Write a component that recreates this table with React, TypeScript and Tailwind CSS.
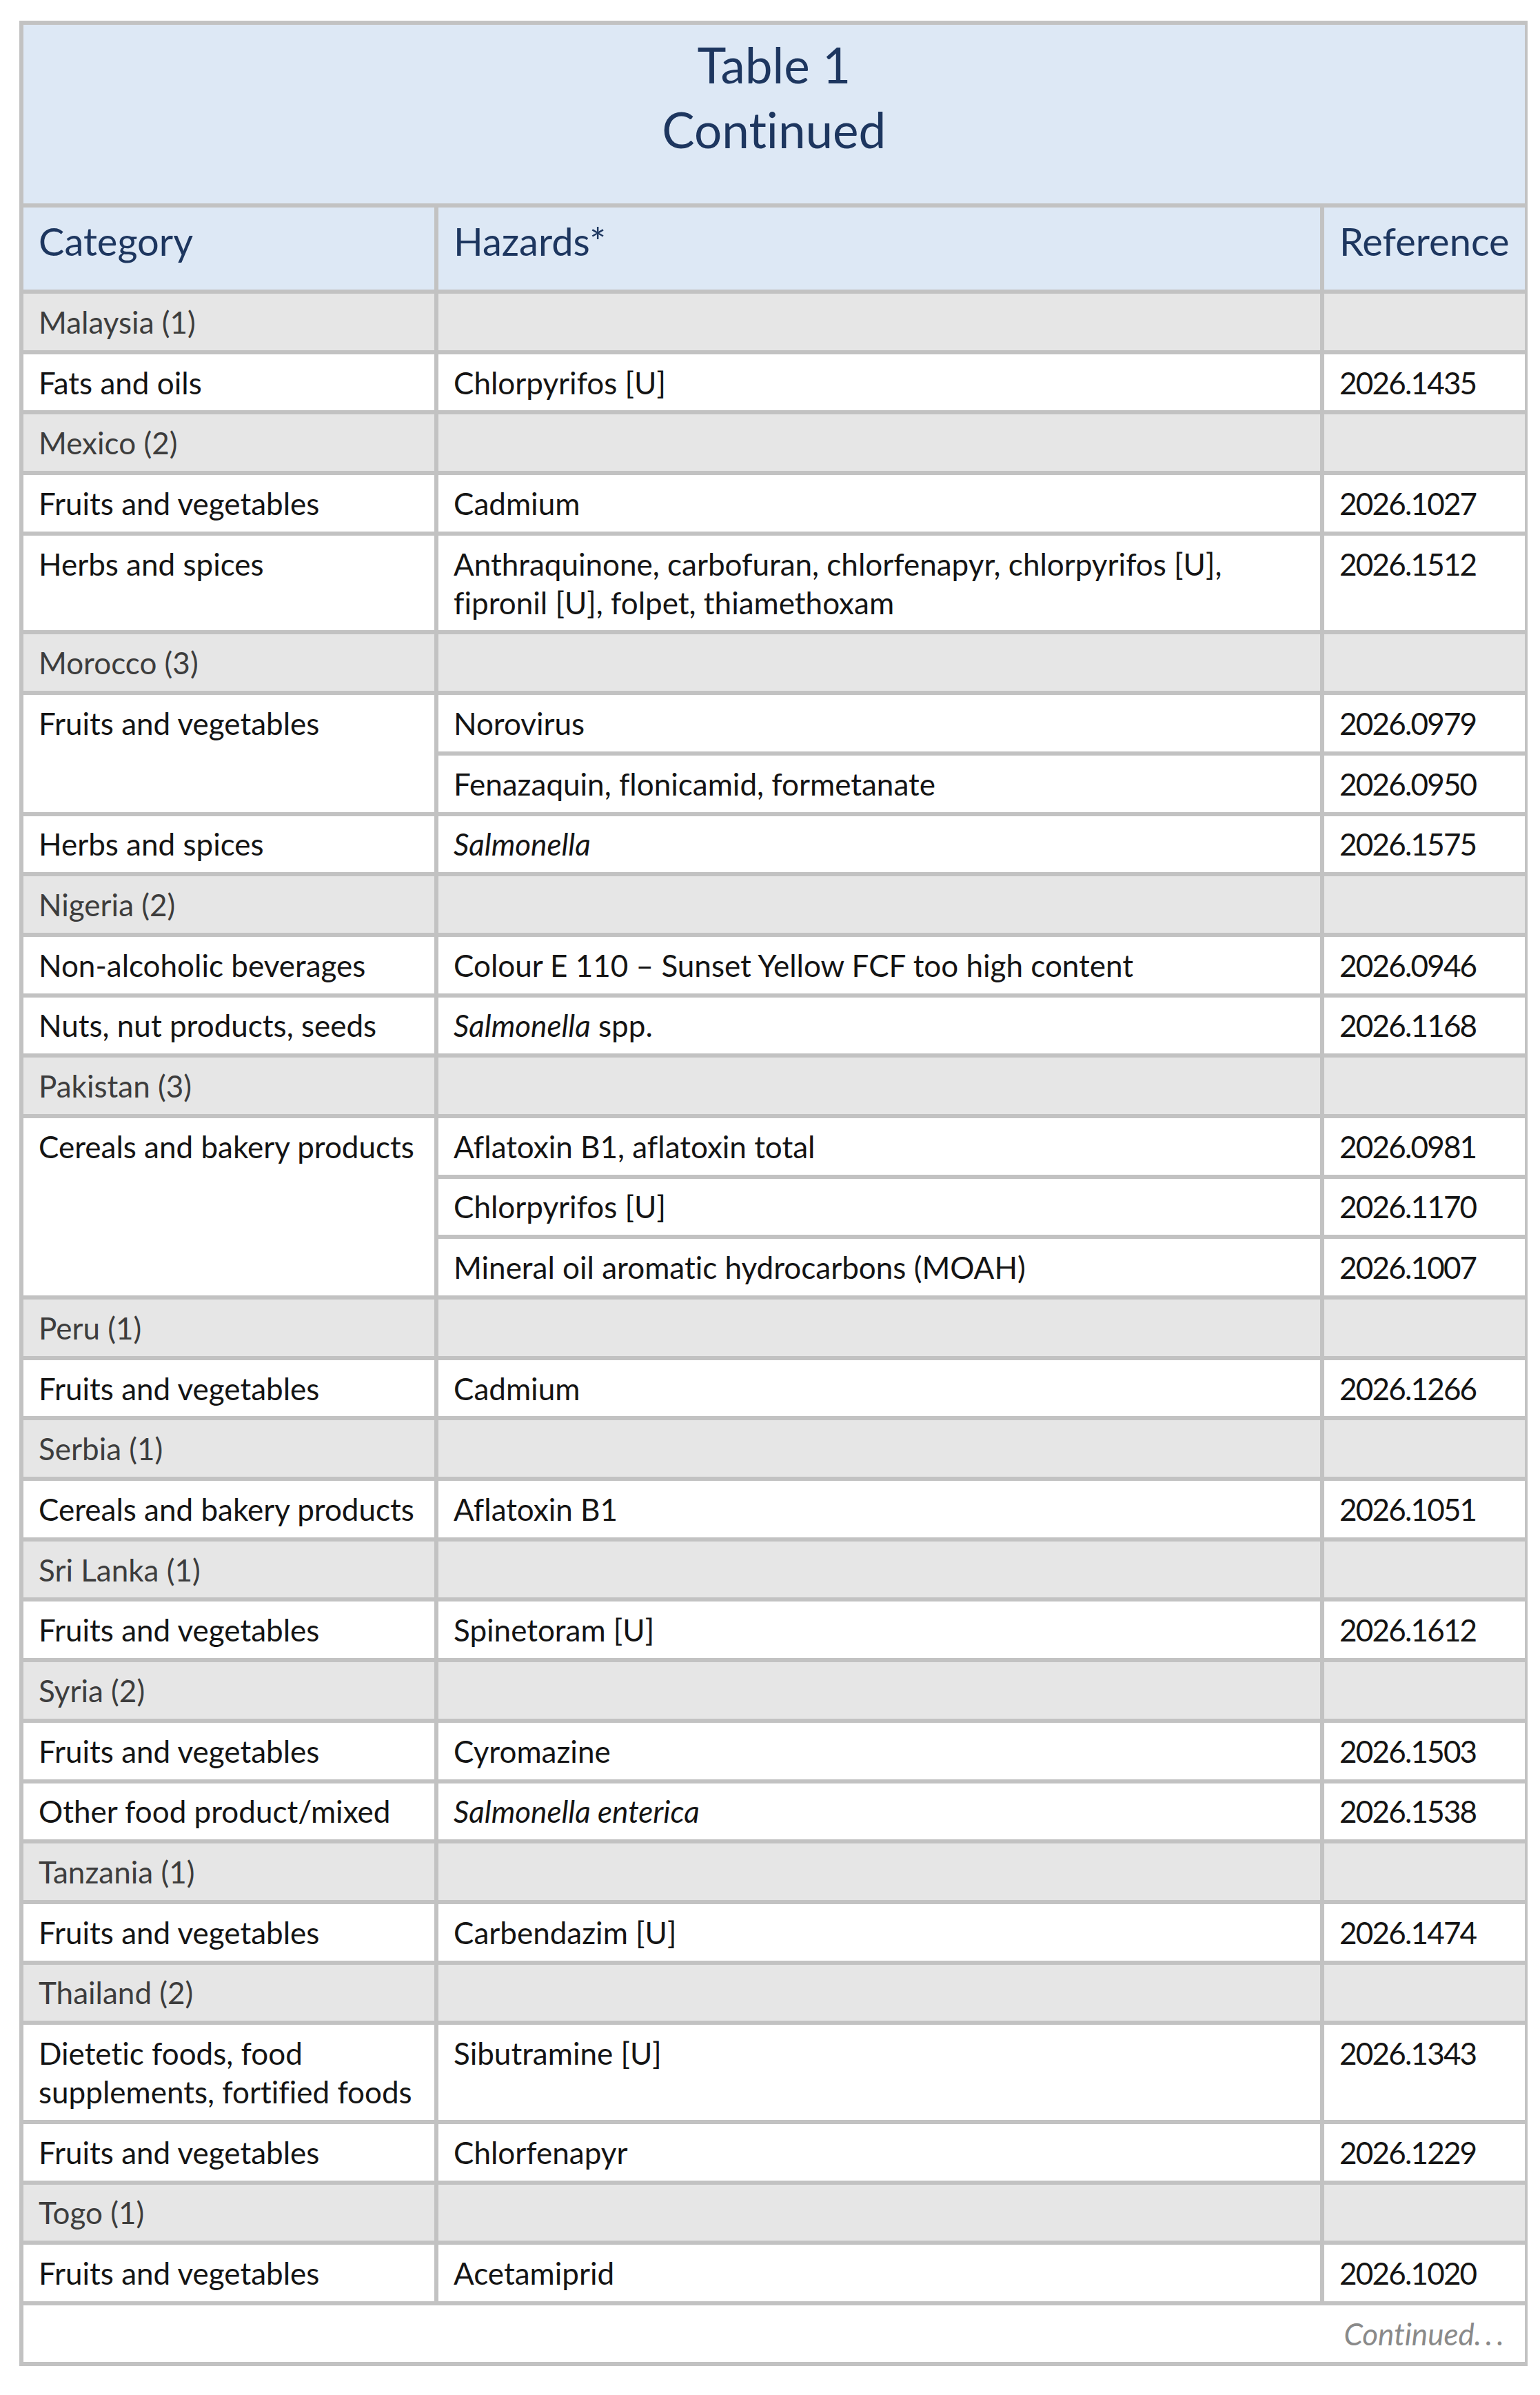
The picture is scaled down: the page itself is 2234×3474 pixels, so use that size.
import * as React from "react"

type Item = {
  category?: React.ReactNode
  span?: 2 | 3
  hazard: React.ReactNode
  reference: string
}

type Group = {
  country: string
  items: Item[]
}

const groups: Group[] = [
  {
    country: "Malaysia (1)",
    items: [{ category: "Fats and oils", hazard: "Chlorpyrifos [U]", reference: "2026.1435" }],
  },
  {
    country: "Mexico (2)",
    items: [
      { category: "Fruits and vegetables", hazard: "Cadmium", reference: "2026.1027" },
      {
        category: "Herbs and spices",
        hazard: (
          <>
            Anthraquinone, carbofuran, chlorfenapyr, chlorpyrifos [U],
            <br />
            fipronil [U], folpet, thiamethoxam
          </>
        ),
        reference: "2026.1512",
      },
    ],
  },
  {
    country: "Morocco (3)",
    items: [
      { category: "Fruits and vegetables", span: 2, hazard: "Norovirus", reference: "2026.0979" },
      { hazard: "Fenazaquin, flonicamid, formetanate", reference: "2026.0950" },
      { category: "Herbs and spices", hazard: <i>Salmonella</i>, reference: "2026.1575" },
    ],
  },
  {
    country: "Nigeria (2)",
    items: [
      {
        category: "Non-alcoholic beverages",
        hazard: "Colour E 110 – Sunset Yellow FCF too high content",
        reference: "2026.0946",
      },
      {
        category: "Nuts, nut products, seeds",
        hazard: (
          <>
            <i>Salmonella</i> spp.
          </>
        ),
        reference: "2026.1168",
      },
    ],
  },
  {
    country: "Pakistan (3)",
    items: [
      {
        category: "Cereals and bakery products",
        span: 3,
        hazard: "Aflatoxin B1, aflatoxin total",
        reference: "2026.0981",
      },
      { hazard: "Chlorpyrifos [U]", reference: "2026.1170" },
      { hazard: "Mineral oil aromatic hydrocarbons (MOAH)", reference: "2026.1007" },
    ],
  },
  {
    country: "Peru (1)",
    items: [{ category: "Fruits and vegetables", hazard: "Cadmium", reference: "2026.1266" }],
  },
  {
    country: "Serbia (1)",
    items: [{ category: "Cereals and bakery products", hazard: "Aflatoxin B1", reference: "2026.1051" }],
  },
  {
    country: "Sri Lanka (1)",
    items: [{ category: "Fruits and vegetables", hazard: "Spinetoram [U]", reference: "2026.1612" }],
  },
  {
    country: "Syria (2)",
    items: [
      { category: "Fruits and vegetables", hazard: "Cyromazine", reference: "2026.1503" },
      { category: "Other food product/mixed", hazard: <i>Salmonella enterica</i>, reference: "2026.1538" },
    ],
  },
  {
    country: "Tanzania (1)",
    items: [{ category: "Fruits and vegetables", hazard: "Carbendazim [U]", reference: "2026.1474" }],
  },
  {
    country: "Thailand (2)",
    items: [
      {
        category: (
          <>
            Dietetic foods, food
            <br />
            supplements, fortified foods
          </>
        ),
        hazard: "Sibutramine [U]",
        reference: "2026.1343",
      },
      { category: "Fruits and vegetables", hazard: "Chlorfenapyr", reference: "2026.1229" },
    ],
  },
  {
    country: "Togo (1)",
    items: [{ category: "Fruits and vegetables", hazard: "Acetamiprid", reference: "2026.1020" }],
  },
]

const cell = "bg-white px-[22px] py-[12.85px] text-[44px] leading-[56px] text-[#141414] whitespace-nowrap"
const groupCell = "bg-[#e6e6e6] px-[22px] py-[12.85px] text-[44px] leading-[56px] text-[#3d3d3d] whitespace-nowrap"
const headCell = "bg-[#dde8f5] px-[22px] pt-[13.5px] pb-[35.5px] text-[56px] leading-[70px] text-[#1d365f]"

function GroupRows({ group }: { group: Group }) {
  return (
    <>
      <div className={groupCell}>{group.country}</div>
      <div className="bg-[#e6e6e6]" />
      <div className="bg-[#e6e6e6]" />
      {group.items.map((item, i) => (
        <React.Fragment key={i}>
          {item.category !== undefined && (
            <div
              className={
                item.span === 3 ? `${cell} row-span-3` : item.span === 2 ? `${cell} row-span-2` : cell
              }
            >
              {item.category}
            </div>
          )}
          <div className={cell}>{item.hazard}</div>
          <div className={`${cell} tracking-[-1.8px]`}>{item.reference}</div>
        </React.Fragment>
      ))}
    </>
  )
}

export default function App() {
  return (
    <div className="min-h-[3474px] bg-white pt-[30px] pl-[28px] font-['Lato',sans-serif] [font-variant-ligatures:no-common-ligatures]">
      <div className="grid w-[2188px] grid-cols-[596px_1279px_1fr] gap-[6px] bg-[#c2c2c2] p-[6px]">
        {/* Caption */}
        <div className="col-span-3 bg-[#dde8f5] pt-[11px] pb-[60px] text-center text-[71px] leading-[94px] text-[#1d365f]">
          <div>Table 1</div>
          <div>Continued</div>
        </div>

        {/* Column headings */}
        <div className={headCell}>Category</div>
        <div className={headCell}>Hazards*</div>
        <div className={headCell}>Reference</div>

        {groups.map((g) => (
          <GroupRows key={g.country} group={g} />
        ))}

        <div className="col-span-3 bg-white px-[24px] py-[12.85px] text-right text-[44px] leading-[56px] italic text-[#8a8a8a]">
          Continued<span className="tracking-[6px]">...</span>
        </div>
      </div>
    </div>
  )
}
